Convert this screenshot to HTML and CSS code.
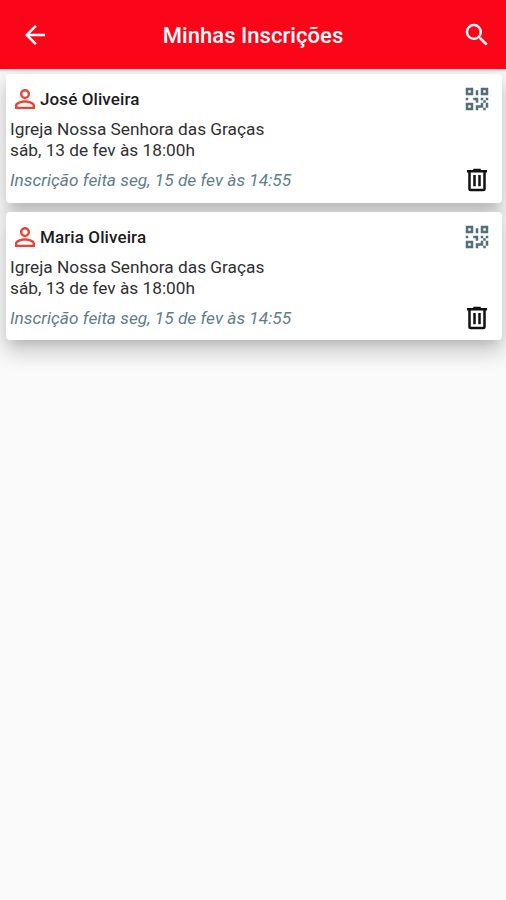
FILE: index.html
```html
<!DOCTYPE html>
<html lang="pt-BR">
<head>
<meta charset="utf-8">
<title>Minhas Inscrições</title>
<link rel="stylesheet" href="styles.css">
</head>
<body>
<svg width="0" height="0" class="defs">
  <symbol id="person" viewBox="0 0 24 24"><path d="M12 5.9a2.1 2.1 0 1 1 0 4.2 2.1 2.1 0 0 1 0-4.2m0 9c2.97 0 6.1 1.46 6.1 2.1v1.1H5.9V17c0-.64 3.13-2.1 6.1-2.1M12 4C9.79 4 8 5.79 8 8s1.79 4 4 4 4-1.79 4-4-1.79-4-4-4zm0 9c-2.67 0-8 1.34-8 4v3h16v-3c0-2.66-5.33-4-8-4z"/></symbol>
  <symbol id="qr" viewBox="0 0 24 24"><path d="M3,11H5V13H3V11M11,5H13V9H11V5M9,11H13V15H11V13H9V11M15,11H17V13H19V11H21V13H19V15H21V19H19V21H17V19H13V21H11V17H15V15H17V13H15V11M19,19V15H17V19H19M15,3H21V9H15V3M17,5V7H19V5H17M3,3H9V9H3V3M5,5V7H7V5H5M3,15H9V21H3V15M5,17V19H7V17H5Z"/></symbol>
  <symbol id="trash" viewBox="0 0 24 24"><path d="M9,3V4H4V6H5V19A2,2 0 0,0 7,21H17A2,2 0 0,0 19,19V6H20V4H15V3H9M7,6H17V19H7V6M9,8V17H11V8H9M13,8V17H15V8H13Z"/></symbol>
</svg>
<header class="bar">
  <svg class="icon" viewBox="0 0 24 24"><path d="M20 11H7.83l5.59-5.59L12 4l-8 8 8 8 1.41-1.41L7.83 13H20v-2z"/></svg>
  <h1 class="title">Minhas Inscrições</h1>
  <svg class="icon" viewBox="0 0 24 24"><path d="M15.5 14h-.79l-.28-.27A6.471 6.471 0 0 0 16 9.5 6.5 6.5 0 1 0 9.5 16c1.61 0 3.09-.59 4.23-1.57l.27.28v.79l5 4.99L20.49 19l-4.99-5zm-6 0C7.01 14 5 11.99 5 9.5S7.01 5 9.5 5 14 7.01 14 9.5 11.99 14 9.5 14z"/></svg>
</header>
<main class="list">
  <article class="card">
    <div class="row">
      <svg class="icon person"><use href="#person"/></svg>
      <h2 class="name">José Oliveira</h2>
      <svg class="icon qr"><use href="#qr"/></svg>
    </div>
    <p class="place">Igreja Nossa Senhora das Graças</p>
    <p class="place">sáb, 13 de fev às 18:00h</p>
    <div class="row foot">
      <p class="date">Inscrição feita seg, 15 de fev às 14:55</p>
      <svg class="icon trash"><use href="#trash"/></svg>
    </div>
  </article>
  <article class="card">
    <div class="row">
      <svg class="icon person"><use href="#person"/></svg>
      <h2 class="name">Maria Oliveira</h2>
      <svg class="icon qr"><use href="#qr"/></svg>
    </div>
    <p class="place">Igreja Nossa Senhora das Graças</p>
    <p class="place">sáb, 13 de fev às 18:00h</p>
    <div class="row foot">
      <p class="date">Inscrição feita seg, 15 de fev às 14:55</p>
      <svg class="icon trash"><use href="#trash"/></svg>
    </div>
  </article>
</main>
</body>
</html>
```
FILE: styles.css
```css
* { box-sizing: border-box; margin: 0; }
body { min-height: 900px; background: #fafafa; font-family: Roboto, sans-serif; overflow: hidden; }
.defs { display: block; height: 0; }
.bar {
  position: relative;
  z-index: 2;
  display: flex;
  align-items: center;
  height: 69px;
  padding: 1px 14px 0 20px;
  background: #fc0519;
  color: #fff;
  box-shadow: 0 1px 3px rgba(0, 0, 0, .2);
}
.icon { display: block; flex: none; width: 30px; height: 30px; fill: currentColor; }
.title { flex: 1; padding-right: 6px; text-align: center; font-size: 22px; font-weight: 500; letter-spacing: .05px; }
.list { display: flex; flex-direction: column; gap: 9px; padding: 5px 4px 0 6px; }
.card {
  height: 129px;
  padding: 10px 10px 0 4px;
  border-radius: 4px;
  background: #fff;
  box-shadow: 0 8px 10px -5px rgba(0, 0, 0, .12), 0 12px 20px 2px rgba(0, 0, 0, .11), 0 5px 26px 4px rgba(0, 0, 0, .09);
}
.card + .card { height: 128px; clip-path: inset(-8px -30px -60px -30px); }
.row { display: flex; align-items: center; height: 30px; }
.person { color: #e94335; }
.name { flex: 1; padding-bottom: 1px; font-size: 17px; font-weight: 500; letter-spacing: .1px; color: #1c1c1c; }
.qr { color: #546e7a; }
.trash { color: #111; }
.place { font-size: 17.25px; line-height: 21px; color: #303030; }
.place:nth-of-type(1) { margin-top: 5px; }
.foot { justify-content: space-between; margin-top: 4px; }
.date { font-size: 17.25px; font-style: italic; letter-spacing: .02px; color: #607d8b; }
```
